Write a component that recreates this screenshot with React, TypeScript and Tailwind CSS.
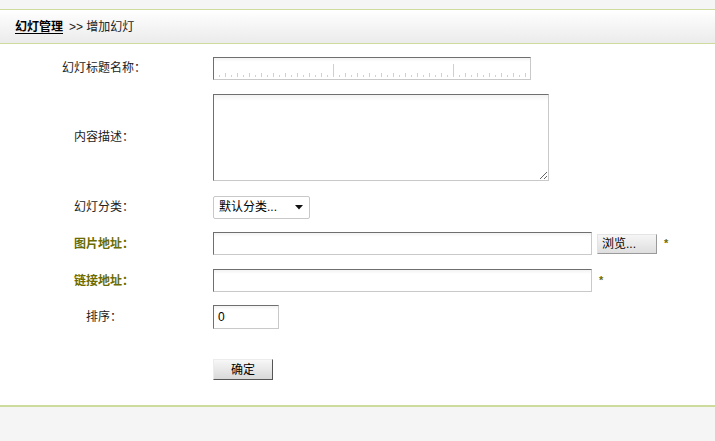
import React from "react";

const font = { fontFamily: '"Liberation Sans", "Noto Sans CJK SC", sans-serif' };

function Ruler() {
  const ticks = [];
  for (let x = 6; x < 316; x += 6) {
    const i = x / 6;
    const big = x === 120 || x === 240;
    const h = big ? 13 : i % 2 === 0 ? 4 : 2;
    ticks.push(<rect key={x} x={x} y={21 - h} width={1} height={h} fill="#b9e0b9" />);
  }
  return (
    <svg className="pointer-events-none absolute left-0 top-0 z-10" width="317" height="23">
      {ticks}
    </svg>
  );
}

function Label({ children, strong = false }: { children: React.ReactNode; strong?: boolean }) {
  return (
    <div className={strong ? "w-[208px] text-center text-[12px] font-bold text-[#6b6b00]" : "w-[208px] text-center text-[12px] text-[#222]"}>
      {children}
    </div>
  );
}

const inputCls =
  "h-[23px] border border-t-[#6f6f6f] border-l-[#6f6f6f] border-r-[#c9c9c9] border-b-[#c9c9c9] bg-gradient-to-b from-[#f3f3f3] to-white to-[4px] px-1 text-[12px] outline-none";

export default function App() {
  return (
    <div className="h-[441px] w-[715px] overflow-hidden bg-[#f5f5f5]" style={font}>
      <div className="h-[9px] bg-[#f5f5f5]" />
      <div className="flex h-[35px] items-center border-y border-[#cddb9c] bg-gradient-to-b from-white to-[#ebebeb] pl-[15px] text-[12px] text-[#222]">
        <span className="font-bold text-black underline underline-offset-2">幻灯管理</span>
        <span className="ml-[6px]">&gt;&gt; 增加幻灯</span>
      </div>

      <div className="bg-white pt-[6px]">
        <div className="flex h-[36px] items-center">
          <Label>幻灯标题名称：</Label>
          <div className="relative ml-[5px]">
            <input className={inputCls + " relative w-[318px]"} />
            <Ruler />
          </div>
        </div>

        <div className="flex h-[102px] items-center">
          <Label>内容描述：</Label>
          <textarea className="ml-[5px] h-[87px] w-[336px] border border-t-[#6f6f6f] border-l-[#6f6f6f] border-r-[#c9c9c9] border-b-[#c9c9c9] bg-gradient-to-b from-[#f3f3f3] to-white to-[6px] text-[12px] outline-none" />
        </div>

        <div className="flex h-[38px] items-center">
          <Label>幻灯分类：</Label>
          <div className="ml-[5px] flex h-[23px] w-[97px] items-center justify-between rounded-[2px] border border-[#c8c8c8] bg-white pl-[5px] pr-[6px] text-[12px] text-black">
            <span>默认分类...</span>
            <svg width="8" height="5" viewBox="0 0 8 5">
              <path d="M0 0h8L4 4.5z" fill="#111" />
            </svg>
          </div>
        </div>

        <div className="flex h-[35px] items-center">
          <Label strong>图片地址：</Label>
          <input className={inputCls + " ml-[5px] w-[379px]"} />
          <button className="ml-[5px] h-[20px] w-[60px] border border-t-[#e4e4e4] border-l-[#e4e4e4] border-r-[#9a9a9a] border-b-[#9a9a9a] bg-gradient-to-b from-[#f6f6f6] to-[#dedede] pl-[4px] text-left text-[12px] text-black">
            浏览...
          </button>
          <span className="ml-[7px] text-[11px] font-bold text-[#6b6b00]">*</span>
        </div>

        <div className="flex h-[39px] items-center">
          <Label strong>链接地址：</Label>
          <input className={inputCls + " ml-[5px] w-[379px]"} />
          <span className="ml-[7px] text-[11px] font-bold text-[#6b6b00]">*</span>
        </div>

        <div className="flex h-[34px] items-center">
          <Label>排序：</Label>
          <input defaultValue="0" className={inputCls + " ml-[5px] h-[24px] w-[66px] text-black"} />
        </div>

        <div className="flex h-[71px] items-center">
          <div className="w-[208px]" />
          <button className="ml-[5px] h-[21px] w-[60px] border border-t-[#ececec] border-l-[#ececec] border-r-[#555] border-b-[#555] bg-gradient-to-b from-[#f7f7f7] to-[#d9d9d9] text-[12px] text-black">
            确定
          </button>
        </div>
      </div>

      <div className="border-t-2 border-[#cddb9c] bg-[#f5f5f5]" />
    </div>
  );
}
